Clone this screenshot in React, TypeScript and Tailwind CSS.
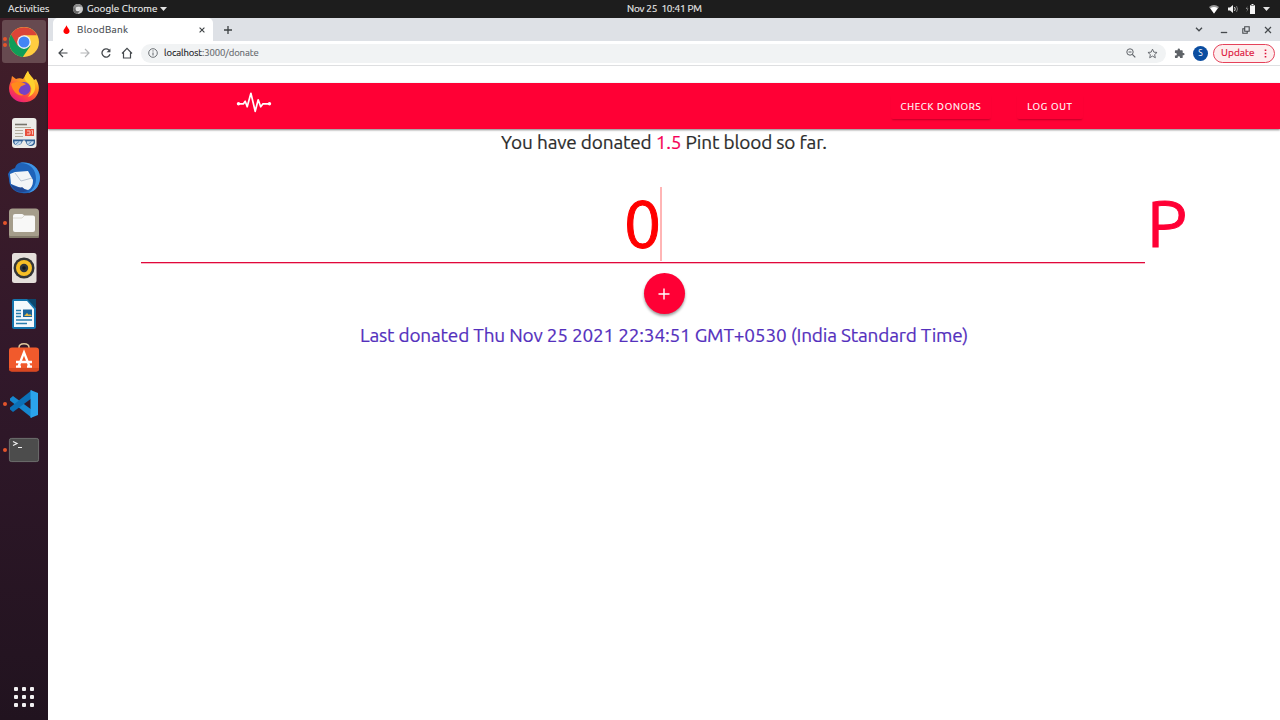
import type { ReactNode } from "react";

function ChromeIcon({ className, mono = false }: { className: string; mono?: boolean }) {
  const c = mono ? ["#8b8b8b", "#c9c9c9", "#6a6a6a", "#e0e0e0"] : ["#db4437", "#ffcd40", "#0f9d58", "#4285f4"];
  return (
    <svg viewBox="0 0 48 48" className={className}>
      <circle cx="24" cy="24" r="24" fill={c[1]} />
      <path d="M24 24 L3.2 12 A24 24 0 0 0 22 47.9 L34.4 30 Z" fill={c[2]} />
      <path d="M3.2 12 A24 24 0 0 1 44.8 13 H24 L13.6 30 Z" fill={c[0]} />
      <circle cx="24" cy="24" r="11" fill="#f1f1f1" />
      <circle cx="24" cy="24" r="8.8" fill={c[3]} />
    </svg>
  );
}

function Firefox() {
  return (
    <svg viewBox="0 0 32 32" className="size-8">
      <defs>
        <linearGradient id="ff" x1="0.8" y1="0" x2="0.2" y2="1">
          <stop offset="0" stopColor="#fff44f" />
          <stop offset="0.35" stopColor="#ffa01e" />
          <stop offset="0.7" stopColor="#ff4443" />
          <stop offset="1" stopColor="#e31587" />
        </linearGradient>
      </defs>
      <path d="M20 0 C21 4 25 6 26 9 L28 8 C32 15 32 21 27 27 C22 32 12 33 6 28 C0 23 0 16 3 10 L4 5 L8 8 C10 7 13 7 15 8 C17 5 18 3 20 0Z" fill="url(#ff)" />
      <circle cx="16" cy="17.5" r="6.5" fill="#7542c4" />
      <path d="M3 13 C8 10 14 11 18 13 C16 15 13 14 12 17 C9 20 12 23 16 24 C10 26 5 21 3 13Z" fill="#ff8a1c" />
      <path d="M20 0 C21 5 26 7 27 14 C28 20 25 24 20 26 C25 20 24 14 19 11 C15 8 17 4 20 0Z" fill="#ffd22e" />
    </svg>
  );
}

function Reader() {
  return (
    <svg viewBox="0 0 32 32" className="size-8">
      <rect x="4" y="1" width="24.5" height="30" rx="3" fill="#ecebe8" />
      <path d="M7 7.500h12" stroke="#77746b" strokeWidth="1.6" />
      <path d="M7 10.500h16M7 13.500h8M7 16.500h8M7 19.500h8" stroke="#b3ad9d" strokeWidth="1.200" />
      <rect x="17" y="12" width="9" height="7" fill="#e8503c" />
      <path d="M19 14h3v3h-3M23.500 13.500h1v4" fill="none" stroke="#f9c5bb" />
      <path d="M5 22.500h22v3c0 4.500-8 4.500-9 0l-1-2h-2l-1 2c-2 4.500-9 3-9-1z" fill="#2f5e92" />
      <path d="M6.500 24.200h7c0 4.500-6 5-7 1.500zM18.800 24.200h7c0 4.500-6 5-7 1.500z" fill="#c7dcef" />
      <path d="M8 27l3-2.500M20.500 27l3-2.500" stroke="#5d8dbd" />
    </svg>
  );
}

function Thunderbird() {
  return (
    <svg viewBox="0 0 32 32" className="size-8">
      <path d="M11 1 C20 -1 31 4 32 15 C32 26 23 33 14 31 C5 30 1 24 1 17 L0 12 C2 8 4 7 7 6 C8 3 9 2 11 1Z" fill="#1f63b9" />
      <path d="M12 1 C23 1 28 8 28 17 C28 23 25 28 20 31 C29 29 32 22 32 15 C31 5 22-1 12 1Z" fill="#3f95e6" />
      <path d="M2 12 L7 10 L20 9 L25 18 C25 22 24 26 20 28 L13 26 L3 22Z" fill="#f3f5f7" />
      <path d="M7 11 L13 19 L24 16" fill="none" stroke="#b9c4d2" strokeWidth="1" />
      <path d="M3 22 C8 26 13 26 14 25 C16 27 18 28 20 29 C12 32 5 29 3 22Z" fill="#214893" />
    </svg>
  );
}

function Files() {
  return (
    <svg viewBox="0 0 32 32" className="size-8">
      <rect x="1" y="1.500" width="30" height="29.500" rx="3.500" fill="#a59d8b" />
      <rect x="1" y="29" width="30" height="2" rx="1" fill="#837b6b" />
      <path d="M5 9q0-2 2-2h7q1.500 0 2 1.500h9q2 0 2 2V23q0 2-2 2H7q-2 0-2-2z" fill="#f8f8f7" />
      <path d="M5 11h9l2-2" fill="none" stroke="#d4d1c9" strokeWidth=".8" />
    </svg>
  );
}

function Rhythmbox() {
  return (
    <svg viewBox="0 0 32 32" className="size-8">
      <rect x="4" y="1" width="24.500" height="30" rx="2.500" fill="#e5dfdb" />
      <circle cx="16" cy="16" r="10.500" fill="#343536" />
      <circle cx="16" cy="16" r="8" fill="#f7bf26" />
      <circle cx="16" cy="16" r="4.200" fill="#30363c" />
      <circle cx="16" cy="16" r="1.800" fill="#11171d" />
    </svg>
  );
}

function Writer() {
  return (
    <svg viewBox="0 0 32 32" className="size-8">
      <path d="M6 1h14l8 9v19q0 2-2 2H6q-2 0-2-2V3q0-2 2-2z" fill="#1575ae" />
      <path d="M6 3H19l7 8v18H6z" fill="#f4f9fc" />
      <path d="M19 1h9v9z" fill="#0d466c" />
      <path d="M8 12.500h5M8 15.500h5M8 18.500h5M8 22h16M8 25.500h11" stroke="#287eae" strokeWidth="1.400" />
      <rect x="15" y="11.500" width="9" height="7.500" fill="#1b659a" />
      <path d="M16 18l3-3 2 2 1-1 2 2z" fill="#e7b944" />
    </svg>
  );
}

function Software() {
  return (
    <svg viewBox="0 0 32 32" className="size-8">
      <path d="M11 7V4.500c0-5 10-5 10 0V7" fill="none" stroke="#dfc79c" strokeWidth="1.500" />
      <rect x="1" y="4.500" width="30" height="24" rx="3" fill="#f15a2c" />
      <path d="M1 25v.5q0 3 3 3h24q3 0 3-3V25z" fill="#d94720" />
      <path d="M10.500 23.500l5.500-14 5.500 14M8 19h16M8 23.700h5M19 23.700h5" fill="none" stroke="#fff" strokeWidth="2.300" />
    </svg>
  );
}

function VSCode() {
  return (
    <svg viewBox="0 0 32 32" className="size-8">
      <path d="M2 10.500l3-2.500 19 14v8L2 12.500z" fill="#1687cf" />
      <path d="M2 21.500l3 2.500 19-14V2L2 19.500z" fill="#0b70b7" />
      <path d="M22.500 2L30 5v22l-7.500 3z" fill="#2ba4ec" />
    </svg>
  );
}

function Terminal() {
  return (
    <svg viewBox="0 0 32 32" className="size-8">
      <rect x="1" y="4" width="30" height="24" rx="2.500" fill="#4c4c4c" />
      <rect x="1.400" y="4.400" width="29.200" height="23.200" rx="2.200" fill="none" stroke="#737373" strokeWidth=".8" />
      <path d="M5 7.500l4 2-4 2M10 13.500h4" fill="none" stroke="#f2f2f2" strokeWidth="1.200" />
    </svg>
  );
}

function DockItem({ children, dots = 0, active = false }: { children: ReactNode; dots?: number; active?: boolean }) {
  return (
    <div className="flex h-[45.3px] w-12 shrink-0 items-center pl-[2px]">
      <div className={`flex h-[43px] w-[43.5px] items-center rounded-[3px] pl-px ${active ? "bg-[#674a50]" : ""}`}>
        <div className="flex w-1 shrink-0 flex-col items-center gap-[2px]">
          {Array.from({ length: dots }, (_, i) => (
            <span key={i} className="size-[4px] shrink-0 rounded-full bg-[#e4542b]" />
          ))}
        </div>
        <div className="ml-px flex w-8 shrink-0 justify-center">{children}</div>
      </div>
    </div>
  );
}

function Dock() {
  return (
    <aside className="flex w-12 shrink-0 flex-col bg-linear-to-b from-[#421e29] via-[#31182a] to-[#21131f] pt-[1.3px]">
      <DockItem dots={2} active><ChromeIcon className="size-[30px]" /></DockItem>
      <DockItem><Firefox /></DockItem>
      <DockItem><Reader /></DockItem>
      <DockItem><Thunderbird /></DockItem>
      <DockItem dots={1}><Files /></DockItem>
      <DockItem><Rhythmbox /></DockItem>
      <DockItem><Writer /></DockItem>
      <DockItem><Software /></DockItem>
      <DockItem dots={1}><VSCode /></DockItem>
      <DockItem dots={1}><Terminal /></DockItem>
      <div className="mt-auto mb-[13px] ml-[14px] grid w-5 grid-cols-3 gap-1">
        {Array.from({ length: 9 }, (_, i) => (
          <span key={i} className="size-[4px] rounded-[1px] bg-[#f2f0f2]" />
        ))}
      </div>
    </aside>
  );
}

function TopBar() {
  return (
    <header className="flex h-[18px] shrink-0 items-center bg-[#1d1d1d] text-[10px] leading-[18px] whitespace-nowrap text-[#ececec] [-webkit-text-stroke:0.15px]">
      <span className="ml-2 w-[65px] tracking-[0.050px]">Activities</span>
      <ChromeIcon mono className="size-[10px]" />
      <span className="ml-1 w-[73px] tracking-[0.030px]">Google Chrome</span>
      <svg viewBox="0 0 7 4" className="h-1 w-[7px]"><path d="M0 0h7L3.500 4z" fill="#e4e4e4" /></svg>
      <span className="ml-[460px] w-[80px] tracking-[-0.2px] whitespace-pre">Nov 25  10:41 PM</span>
      <div className="ml-auto flex items-center pr-[10px]">
        <svg viewBox="0 0 12 10" className="h-[10px] w-3">
          <path d="M1 3Q6-1 11 3L6 9.500z" fill="#999" />
          <path d="M2.300 4.300Q6 1.500 9.700 4.300L6 9.500z" fill="#fff" />
        </svg>
        <svg viewBox="0 0 12 10" className="ml-[7px] h-[10px] w-3">
          <path d="M1 3.500h2L6 1v8L3 6.500H1z" fill="#f1f1f1" />
          <path d="M7.500 3q1.500 2 0 4" fill="none" stroke="#ddd" /><path d="M9.500 2q2 3 0 6" fill="none" stroke="#777" />
        </svg>
        <svg viewBox="0 0 12 12" className="ml-[6px] h-3 w-3">
          <path d="M2.500 3L.8 6h1.500L1.500 9 3.500 5.500H2z" fill="#999" />
          <path d="M5 2h1.500V1h2v1H10v9H5z" fill="#f4f4f4" /><path d="M5.500 2.500h4" stroke="#888" />
        </svg>
        <svg viewBox="0 0 7 4" className="ml-[6px] h-1 w-[7px]"><path d="M0 0h7L3.500 4z" fill="#e4e4e4" /></svg>
      </div>
    </header>
  );
}

function TabStrip() {
  return (
    <div className="flex h-[23px] shrink-0 items-stretch bg-[#dee1e6]">
      <div className="ml-[5px] flex w-[160px] items-center rounded-t-[5px] bg-white text-[#45494d]">
        <svg viewBox="0 0 8 10" className="ml-[10px] h-[9px] w-[7px]"><path d="M4 0C5 3 7.500 4.500 7.500 6.800a3.500 3.200 0 0 1-7 0C.5 4.500 3 3 4 0z" fill="#f00" /></svg>
        <span className="ml-[7px] text-[10px] leading-none tracking-[0.280px] [-webkit-text-stroke:0.15px]">BloodBank</span>
        <svg viewBox="0 0 6 6" className="mr-[8px] ml-auto size-[6px]"><path d="M.6.6l4.800 4.800M5.400.6L.6 5.400" stroke="#3c4043" strokeWidth="1.100" /></svg>
      </div>
      <svg viewBox="0 0 8 8" className="ml-[11px] size-2 self-center"><path d="M4 0v8M0 4h8" stroke="#3c4043" strokeWidth="1.300" /></svg>
      <div className="ml-auto flex items-center pr-[8px] text-[#45494d]">
        <svg viewBox="0 0 8 5" className="h-[5px] w-2"><path d="M1 .8l3 3 3-3" fill="none" stroke="currentColor" strokeWidth="1.300" /></svg>
        <svg viewBox="0 0 8 8" className="ml-[17px] size-2"><path d="M.8 6.500h6.400" stroke="currentColor" strokeWidth="1.300" /></svg>
        <svg viewBox="0 0 8 8" className="ml-[14px] size-2"><path d="M2.700.7h4.500v4.500H2.700zM2.700 2.700H.8v4.500h4.400V5.200" fill="none" stroke="currentColor" strokeWidth="1.100" /></svg>
        <svg viewBox="0 0 8 8" className="ml-[14px] size-2"><path d="M1 1l6 6M7 1L1 7" stroke="currentColor" strokeWidth="1.200" /></svg>
      </div>
    </div>
  );
}

function Toolbar() {
  return (
    <div className="flex h-[25px] shrink-0 items-center border-b border-[#dedfe1] bg-white text-[#45494d]">
      <svg viewBox="0 0 10 10" className="ml-[9.500px] size-[10px]"><path d="M9.500 5H1M5 1L1 5l4 4" fill="none" stroke="currentColor" strokeWidth="1.200" /></svg>
      <svg viewBox="0 0 10 10" className="ml-3 size-[10px]"><path d="M.5 5H9M5 1l4 4-4 4" fill="none" stroke="#b3b5b7" strokeWidth="1.200" /></svg>
      <svg viewBox="0 0 10 10" className="ml-[11px] size-[10px]"><path d="M9 6.300A4.100 4.100 0 1 1 8 2.100L9 3.300" fill="none" stroke="currentColor" strokeWidth="1.300" /><path d="M9.400.5v3.800H5.600z" fill="currentColor" /></svg>
      <svg viewBox="0 0 12 12" className="ml-[10px] size-3"><path d="M1 6.500L6 1.300l5 5.200M2.500 5.500V11h7V5.500" fill="none" stroke="currentColor" strokeWidth="1.200" /></svg>
      <div className="ml-[8.500px] flex h-[19px] w-[1025px] items-center rounded-full bg-[#f1f3f4]">
        <svg viewBox="0 0 10 10" className="ml-[7px] size-[10px]"><circle cx="5" cy="5" r="4.300" fill="none" stroke="#5f6368" strokeWidth=".9" /><path d="M5 4.500v3M5 2.400v1.100" stroke="#5f6368" /></svg>
        <span className="ml-[6px] text-[9.500px] leading-none tracking-[-0.080px] whitespace-nowrap text-[#65696d] [-webkit-text-stroke:0.15px]"><span className="text-[#202124]">localhost</span>:3000/donate</span>
        <svg viewBox="0 0 10 10" className="ml-auto size-[10px]"><circle cx="4" cy="4" r="3.200" fill="none" stroke="#5f6368" strokeWidth="1" /><path d="M2.500 4h3M6.300 6.300L9.300 9.300" stroke="#5f6368" strokeWidth="1.200" /></svg>
        <svg viewBox="0 0 24 24" className="mr-2 ml-[11px] size-[11px]"><path d="M12 2.500l2.900 6.500 7 .7-5.300 4.700 1.600 6.900-6.200-3.700-6.200 3.700 1.600-6.900L2.100 9.700l7-.7z" fill="none" stroke="#5f6368" strokeWidth="2" /></svg>
      </div>
      <svg viewBox="0 0 24 24" className="ml-2 size-[11px]"><path d="M20.500 11H19V7c0-1.100-.9-2-2-2h-4V3.500a2.500 2.500 0 0 0-5 0V5H4c-1.100 0-2 .9-2 2v3.800h1.500a2.700 2.700 0 0 1 0 5.400H2V20c0 1.100.9 2 2 2h3.800v-1.500a2.700 2.700 0 0 1 5.400 0V22H17c1.100 0 2-.9 2-2v-4h1.500a2.500 2.500 0 0 0 0-5z" fill="#5f6368" /></svg>
      <span className="ml-2 flex size-[15px] items-center justify-center rounded-full bg-[#0b4da0] text-[8.500px] leading-none text-white">S</span>
      <div className="ml-[5px] flex h-[19px] w-[62px] items-center rounded-full border border-[#e5425a] bg-[#fdeeee] text-[#dc1238]">
        <span className="ml-[7px] text-[10px] leading-none tracking-[0.100px] [-webkit-text-stroke:0.2px]">Update</span>
        <svg viewBox="0 0 3 9" className="mr-[7px] ml-auto h-[9px] w-[3px]"><path d="M.7.5h1.600v1.600H.7zM.7 3.700h1.600v1.600H.7zM.7 6.900h1.600v1.600H.7z" fill="currentColor" /></svg>
      </div>
    </div>
  );
}

function NavBar() {
  return (
    <nav className="mt-[17px] flex h-[46px] shrink-0 bg-[#ff0035] pl-[188px] text-[9.700px] text-white shadow-[0_1px_2px_rgba(0,0,0,0.5)]">
      <svg viewBox="0 0 36 22" className="mt-[9px] h-[22px] w-9">
        <path d="M2.500 11.800h5l1.700-2.500 2 5.500 3.700-13.500 4.300 18 3-11.500 2.500 7 2.300-3H33.500" fill="none" stroke="#fff" strokeWidth="1.700" strokeLinejoin="round" />
        <circle cx="2.500" cy="11.800" r="1.700" fill="#fff" /><circle cx="33.500" cy="11.800" r="1.700" fill="#fff" />
      </svg>
      <button className="mt-[11px] ml-[619px] h-[25px] w-[100px] rounded-[2px] pt-[2px] tracking-[0.740px] whitespace-nowrap shadow-[0_2px_2px_-1px_rgba(0,0,0,0.25)] [-webkit-text-stroke:0.15px]">CHECK DONORS</button>
      <button className="mt-[11px] ml-[26px] h-[25px] w-[66px] rounded-[2px] pt-[2px] tracking-[0.740px] whitespace-nowrap shadow-[0_2px_2px_-1px_rgba(0,0,0,0.25)] [-webkit-text-stroke:0.15px]">LOG OUT</button>
    </nav>
  );
}

function DonatePage() {
  return (
    <main className="flex flex-1 flex-col items-center">
      <p className="h-[28px] text-[19px] leading-[26px] tracking-[-0.16px] whitespace-nowrap text-[#2c2c2c] [-webkit-text-stroke:0.2px]">
        You have donated <span className="text-[#f50057]">1.5</span> Pint blood so far.
      </p>
      <div className="mt-[29px] flex h-[77px] w-full pl-[93px] text-[66.67px] leading-[75px] [-webkit-text-stroke:1px]">
        <div className="flex w-[1004px] flex-col">
          <div className="flex h-[76px] justify-center">
            <span className="text-[#ff0000]">0</span>
            <span className="mt-px -ml-px h-[74px] w-[2px] bg-[#ffb5b5]" />
          </div>
          <div className="h-px shrink-0 bg-[#e0083c] shadow-[0_1px_0_#f9b4c2]" />
        </div>
        <span className="ml-[2px] -mt-px text-[#ff0035]">P</span>
      </div>
      <button className="mt-[10px] flex size-[41px] items-center justify-center rounded-full bg-[#ff0035] shadow-[0_2px_3px_rgba(0,0,0,0.4)]">
        <svg viewBox="0 0 12 12" className="size-3"><path d="M6 .5v11M.5 6h11" stroke="#fff" strokeWidth="1.400" /></svg>
      </button>
      <p className="mt-[7px] text-[19px] leading-[28px] tracking-[-0.18px] whitespace-nowrap text-[#5430bd] [-webkit-text-stroke:0.2px]">
        Last donated Thu Nov 25 2021 22:34:51 GMT+0530 (India Standard Time)
      </p>
    </main>
  );
}

export default function App() {
  return (
    <div className="flex h-[720px] w-[1280px] flex-col overflow-hidden bg-white font-['Ubuntu','Noto_Sans',sans-serif]">
      <TopBar />
      <div className="flex min-h-0 flex-1">
        <Dock />
        <section className="flex min-w-0 flex-1 flex-col">
          <TabStrip />
          <Toolbar />
          <NavBar />
          <DonatePage />
        </section>
      </div>
    </div>
  );
}
